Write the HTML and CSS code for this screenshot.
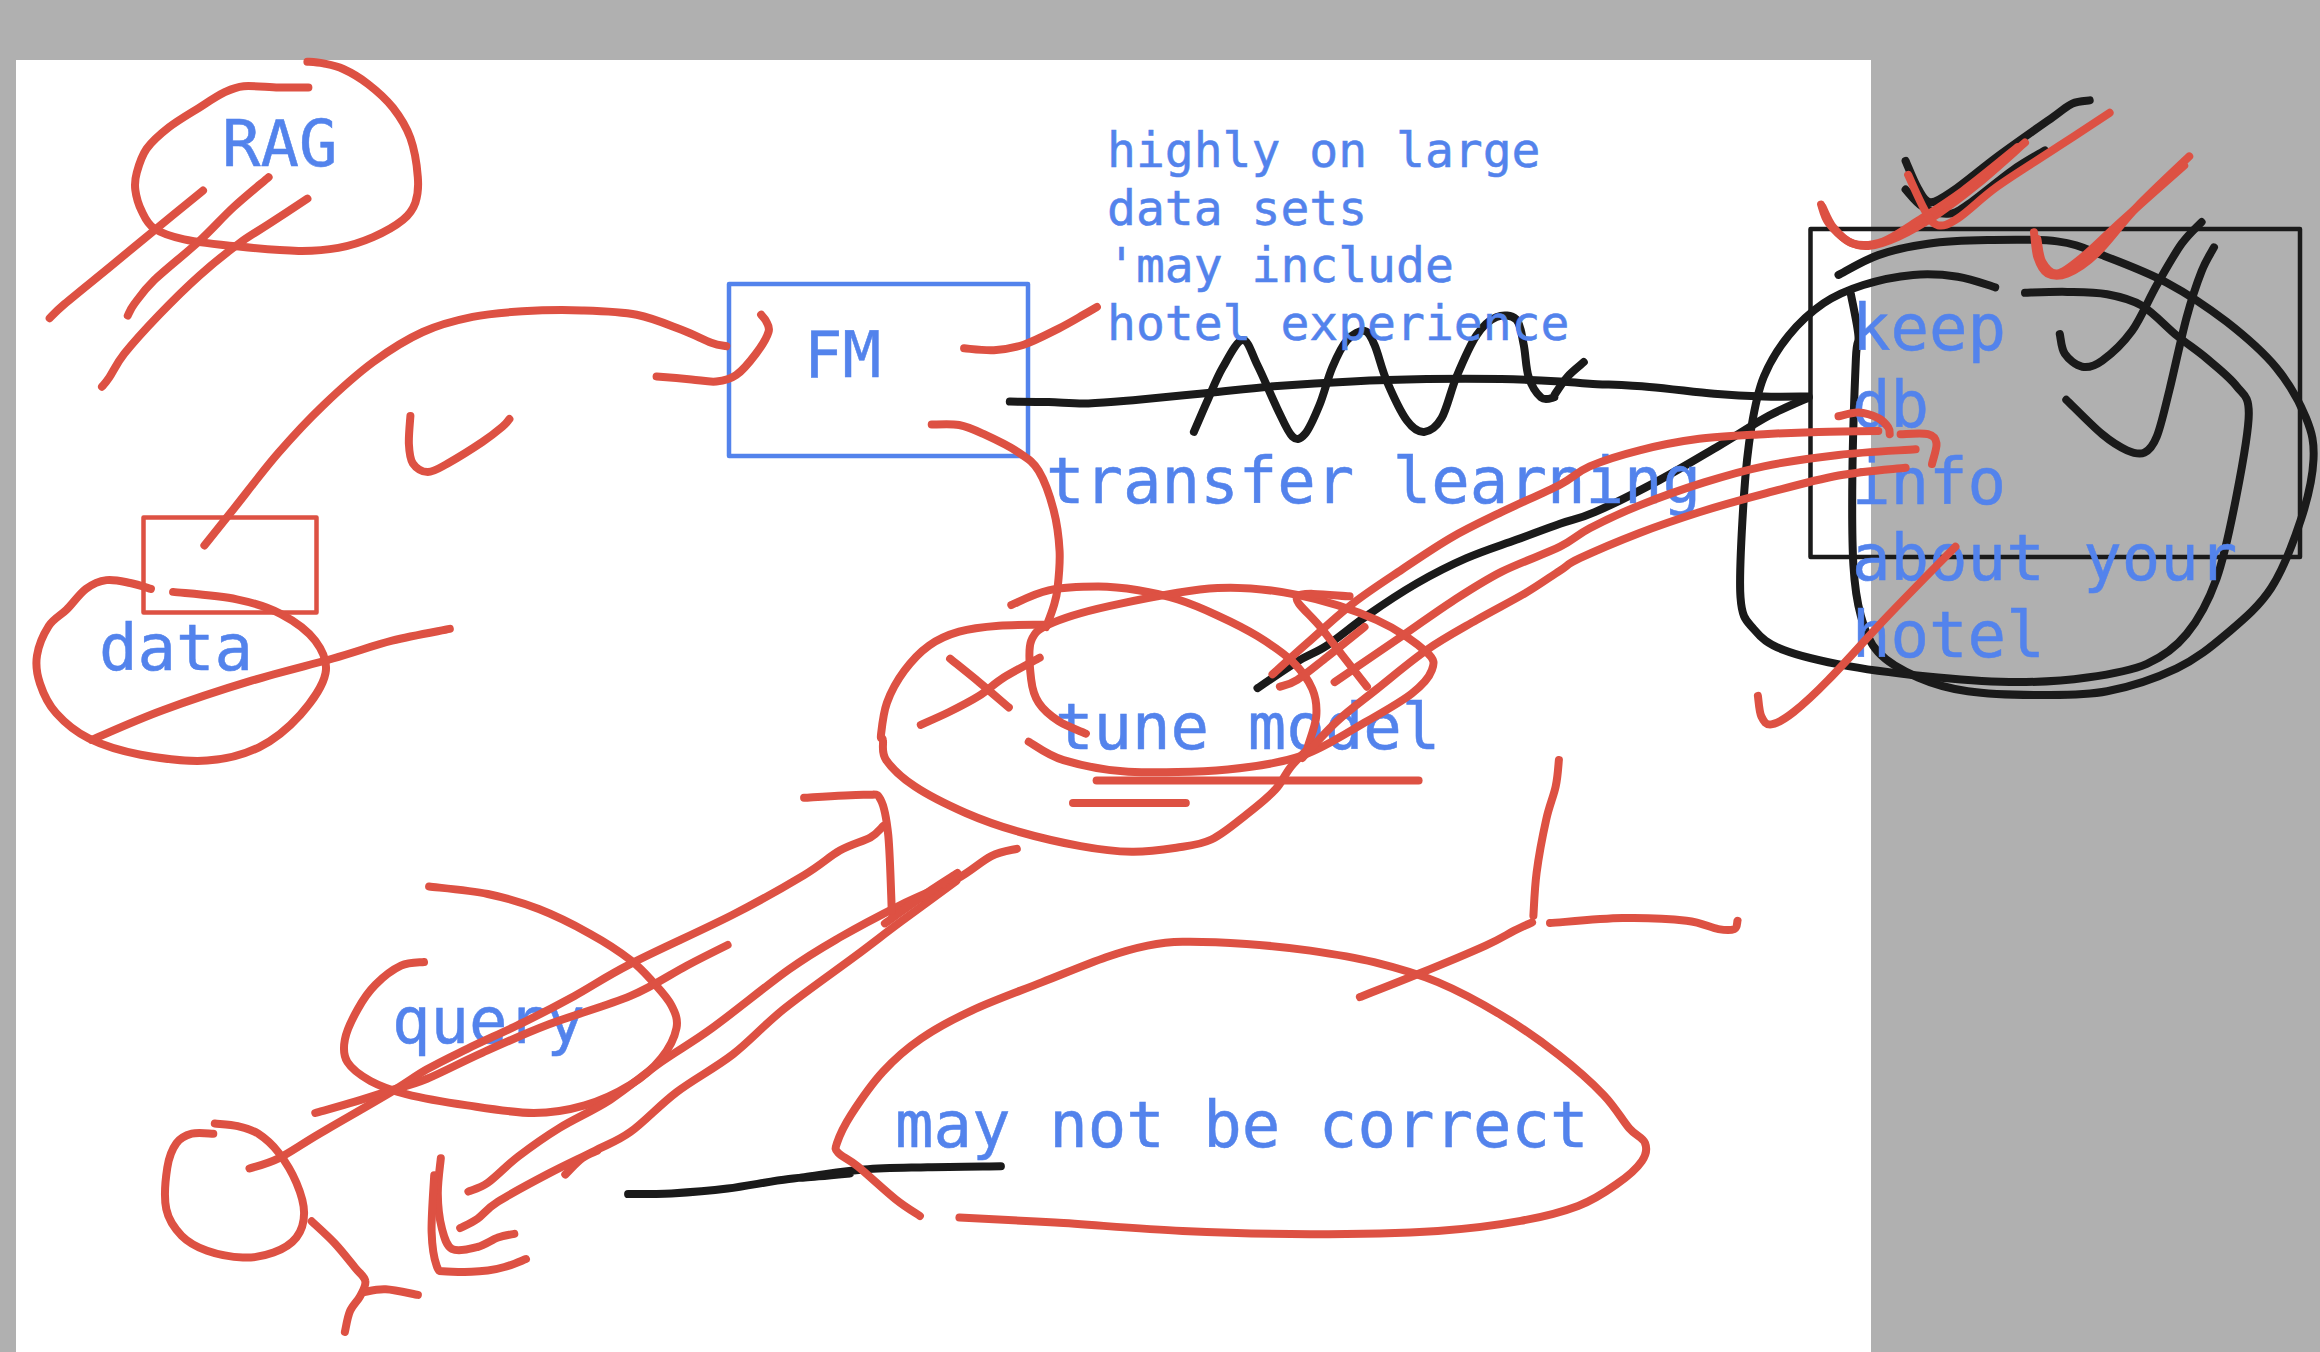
FILE: index.html
```html
<!DOCTYPE html>
<html lang="en">
<head>
<meta charset="utf-8">
<title>Whiteboard</title>
<link rel="stylesheet" href="styles.css">
</head>
<body>
<main class="stage">
  <div class="board"></div>
  <svg class="ink" id="ink-black" viewBox="0 0 2320 1352" aria-hidden="true">
    <rect class="shape shape-blue" x="729" y="284" width="299" height="172"/>
    <rect class="shape shape-black" x="1810.5" y="229" width="489.5" height="328"/>
  </svg>
  <div class="note big t-rag">RAG</div>
  <div class="note big t-data">data</div>
  <div class="note big t-fm">FM</div>
  <div class="note small t-highly">highly on large<br>data sets<br>'may include<br>hotel experience</div>
  <div class="note big t-transfer">transfer learning</div>
  <div class="note big t-tune">tune model</div>
  <div class="note big t-keep">keep<br>db<br>info<br>about your<br>hotel</div>
  <div class="note big t-query">query</div>
  <div class="note big t-correct">may not be correct</div>
  <svg class="ink" id="ink-red" viewBox="0 0 2320 1352" aria-hidden="true">
    <rect class="shape shape-red" x="143.5" y="517.5" width="173" height="95"/>
  </svg>
</main>
<script src="script.js"></script>
</body>
</html>
```
FILE: styles.css
```css
* { box-sizing: border-box; }
html, body { margin: 0; padding: 0; background: #b0b0b0; }
.stage {
  position: relative;
  width: 2320px;
  height: 1352px;
  padding: 60px 449px 0 16px;
  overflow: hidden;
  background: #b0b0b0;
}
.board { height: 100%; background: #fff; }
.ink { position: absolute; left: 0; top: 0; width: 2320px; height: 1352px; }
.shape { fill: none; stroke-width: 4.5; stroke-linejoin: round; }
.shape-blue { stroke: #5383ec; }
.shape-black { stroke: #1a1a1a; }
.shape-red { stroke: #dd5143; }
.stroke { fill: none; stroke-linecap: round; stroke-linejoin: round; stroke-width: 8; }
.stroke-red { stroke: #dd5143; }
.stroke-black { stroke: #1a1a1a; }
.note {
  position: absolute;
  color: #5383ec;
  font-family: "DejaVu Sans Mono", "Liberation Mono", monospace;
  -webkit-text-stroke: 0.5px #5383ec;
  line-height: 1.2;
  white-space: nowrap;
}
.big { font-size: 64px; }
.small { font-size: 48px; }
.t-rag { left: 222px; top: 106px; }
.t-data { left: 99px; top: 610px; }
.t-fm { left: 804px; top: 317px; }
.t-highly { left: 1107px; top: 122px; }
.t-transfer { left: 1046px; top: 443px; }
.t-tune { left: 1055px; top: 689px; }
.t-keep { left: 1852px; top: 290px; }
.t-query { left: 392px; top: 983px; }
.t-correct { left: 895px; top: 1087px; }
```
FILE: script.js
```js
// Pen strokes of the whiteboard: point lists in local frames, drawn as smooth curves.
function frame(sx, sy, ox, oy) {
  return function (flat) {
    var pts = [];
    for (var i = 0; i < flat.length; i += 2) pts.push([ox + flat[i] / sx, oy + flat[i + 1] / sy]);
    return pts;
  };
}
var a = frame(2.0103, 2.3195, 0, 0);
var b = frame(2.0103, 2.178, 780, 60);
var c = frame(2.0103, 2.178, 1540, 60);
var d = frame(1.96, 2.649, 100, 760);
var e = frame(1.568, 3.015, 800, 740);
var f = frame(0.6758, 0.6758, 0, 0);

var red = [
  a([620,203,560,203,490,200,450,215,400,250,340,295,295,345,275,400,272,440,285,490,310,530,370,555,480,572,600,582,680,575,750,550,810,510,835,470,840,410,825,320,790,250,740,195,690,160,650,147,618,143]),
  a([408,442,320,525,220,620,130,705,100,738]),
  a([540,411,470,480,400,560,310,650,270,705,257,732]),
  a([618,461,540,520,480,565,400,640,320,730,250,820,220,875,205,897]),
  a([411,1265,470,1180,560,1050,650,940,750,840,850,770,950,735,1050,722,1170,720,1280,730,1370,765,1430,795,1460,803]),
  a([1320,873,1390,880,1440,885,1480,870,1520,820,1545,770,1540,745,1530,730]),
  a([825,965,822,1030,830,1075,860,1095,900,1075,970,1025,1010,990,1024,972]),
  f([102,398,88,394,72,392,58,398,45,412,33,423,25,443,27,462,38,482,60,499,95,510,140,514,175,505,203,483,220,455,213,433,190,415,160,405,117,400]),
  f([62,500,110,480,170,460,225,445,265,433,304,425]),
  b([370,628,430,632,490,620,560,585,610,555,637,538]),
  b([305,794,360,795,410,815,480,855,520,895,550,980,562,1070,558,1150,550,1190,535,1235]),
  b([465,1187,540,1155,640,1147,720,1155,800,1175,880,1210,960,1255,1030,1310,1070,1370,1078,1430,1060,1500]).concat(e([800,20,770,80,745,150,700,225,645,300,590,325,520,337,440,320,340,275,260,220,180,140,135,60,130,0])).concat(b([203,1470,215,1400,250,1330,300,1275,360,1245,440,1232,530,1230])),
  b([615,1467,560,1440,520,1400,505,1350,505,1265,550,1225,680,1185,880,1150,1040,1165,1200,1220,1300,1290,1310,1330,1270,1380,1180,1440,1050,1515,900,1545,700,1550,570,1525,500,1485]),
  b([342,1304,400,1355,460,1410]),
  b([283,1448,340,1420,400,1385,450,1345,522,1302]),
  b([1145,1168,1040,1168,1090,1240,1180,1365]),
  b([990,1338,1060,1270,1150,1185,1250,1110,1350,1040,1450,985,1568,925]).concat(c([100,885,200,850,320,825,450,815,560,810,680,808])),
  b([1005,1365,1040,1350,1100,1300,1175,1235]),
  b([1115,1355,1250,1255,1350,1180,1450,1115,1568,1060]).concat(c([100,1020,200,970,330,920,450,885,600,860,755,848])),
  b([1050,1520,1120,1440,1200,1370,1300,1285,1400,1220,1500,1160,1568,1112]).concat(c([80,1085,200,1030,320,985,450,945,600,905,735,888])),
  e([465,122,970,122]),
  e([428,190,605,190]),
  e([878,775,970,705,1075,620,1120,575,1148,550]),
  e([1190,60,1185,140,1170,240,1155,400,1150,530]),
  e([1176,552,1290,537,1390,545,1440,570,1465,570,1470,545]),
  e([188,1435,150,1385,90,1285,60,1245,58,1215,80,1130,130,1000,190,900,270,815,380,730,480,655,545,620,600,608,700,615,800,635,900,670,1000,730,1100,830,1190,950,1260,1070,1300,1170,1325,1215,1320,1270,1280,1340,1220,1405,1130,1450,1000,1480,800,1490,600,1480,400,1455,250,1440]),
  d([635,535,590,545,540,595,505,660,480,740,485,800,530,850,600,885,720,915,850,935,950,915,1040,860,1100,790,1130,710,1120,650,1085,590,1040,530,960,460,860,395,760,355,645,335]),
  d([293,1082,350,1055,430,990,570,880,640,820,720,765,830,695,930,625,1040,540,1240,410,1380,305,1450,240,1510,205,1535,175]),
  d([422,935,500,905,570,875,640,845,750,775,880,700,1040,625,1150,545,1230,490]),
  d([722,1143,760,1120,820,1050,900,975,1000,900,1100,800,1200,710,1350,555,1450,470,1568,385]).concat(e([245,420,300,350,340,328])),
  d([706,1240,740,1215,780,1170,880,1095,970,1035,1040,985,1130,880,1240,780,1340,660,1480,520,1568,430]).concat(e([245,425])),
  d([912,1098,945,1055,975,1035]),
  f([598,624,625,605,647,592]),
  f([603,620,630,601,647,590]),
  d([1380,100,1500,92,1530,105,1545,200,1552,400]),
  d([668,1055,662,1150,670,1240,690,1295,740,1290,780,1265,812,1255]),
  d([655,1100,650,1250,660,1340,680,1355,760,1352,800,1340,835,1322]),
  d([222,990,180,990,150,1015,132,1080,130,1190,160,1260,210,1300,280,1318,340,1305,385,1265,400,1200,385,1120,350,1040,310,990,270,970,225,963]),
  d([415,1222,460,1280,500,1345,520,1380,510,1420,490,1460,480,1515]),
  d([515,1410,560,1402,623,1417]),
  c([565,315,580,355,620,395,660,405,720,385,800,335,880,270,975,180]),
  c([568,320,590,365,630,400,690,395,760,350,850,285,960,190]),
  c([740,250,775,330,800,360,840,345,920,275,1040,190,1145,115]),
  c([993,375,1000,430,1020,465,1060,465,1120,420,1200,320,1305,210]),
  c([1000,390,1010,440,1040,465,1090,430,1170,350,1295,230]),
  c([600,776,640,768,680,780,700,800,703,815]),
  c([725,815,780,815,797,835,788,880]),
  c([438,1385,445,1430,465,1447,510,1420,580,1350,700,1210,835,1060])
];

var black = [
  b([462,744,540,745,620,748,720,740,860,725,1000,710,1150,700,1300,695,1450,695,1568,700]).concat(c([100,705,220,712,350,727,450,733,540,733])),
  b([832,810,860,740,890,670,930,610,960,665,1000,760,1030,820,1055,815,1085,750,1110,670,1140,610,1175,590,1195,620,1220,700,1260,785,1295,810,1330,780,1360,690,1400,600,1440,560,1480,565,1495,620,1505,690,1530,735,1555,735]).concat(c([30,728,55,690,88,658])),
  b([960,1368,1040,1310,1100,1275,1180,1210,1280,1140,1380,1085,1480,1045,1568,1010]).concat(c([110,985,240,915,360,840,460,775,540,735])),
  d([1035,1150,1120,1148,1230,1135,1350,1110,1470,1095]).concat(e([0,1320,100,1295,200,1288,315,1285])),
  c([600,468,680,425,780,400,900,392,1040,395,1130,425,1260,485,1380,570,1480,670,1540,780,1555,870,1530,1000,1470,1150,1380,1250,1280,1325,1140,1375,1000,1383,860,1375,760,1345,680,1290,645,1210,630,1100,628,900,635,650,640,600,625,510]),
  c([915,495,840,472,750,468,650,490,570,530,500,600,450,690,425,800,410,950,403,1170,430,1240,490,1285,620,1320,800,1345,960,1355,1100,1345,1220,1315,1300,1250,1360,1130,1400,950,1425,770,1400,710,1340,650,1280,600,1210,535,1140,510,1060,505,975,507]),
  c([1045,597,1055,640,1090,668,1130,655,1190,590,1240,490,1290,400,1330,353]),
  c([1058,740,1130,815,1180,850,1215,855,1240,820,1265,720,1300,560,1330,460,1355,408]),
  c([735,220,760,280,785,310,830,285,920,210,1030,125,1070,95,1105,88]),
  c([735,282,770,320,820,335,860,315,950,240,1015,197])
];

function smooth(p) {
  var s = 'M' + p[0][0].toFixed(1) + ' ' + p[0][1].toFixed(1);
  for (var i = 0; i < p.length - 1; i++) {
    var p0 = p[Math.max(i - 1, 0)], p1 = p[i], p2 = p[i + 1], p3 = p[Math.min(i + 2, p.length - 1)];
    s += 'C' + (p1[0] + (p2[0] - p0[0]) / 6).toFixed(1) + ' ' + (p1[1] + (p2[1] - p0[1]) / 6).toFixed(1) +
         ' ' + (p2[0] - (p3[0] - p1[0]) / 6).toFixed(1) + ' ' + (p2[1] - (p3[1] - p1[1]) / 6).toFixed(1) +
         ' ' + p2[0].toFixed(1) + ' ' + p2[1].toFixed(1);
  }
  return s;
}

function draw(svgId, list, cls) {
  var svg = document.getElementById(svgId);
  list.forEach(function (pts) {
    var path = document.createElementNS('http://www.w3.org/2000/svg', 'path');
    path.setAttribute('d', smooth(pts));
    path.setAttribute('class', 'stroke ' + cls);
    svg.appendChild(path);
  });
}
draw('ink-black', black, 'stroke-black');
draw('ink-red', red, 'stroke-red');
```
